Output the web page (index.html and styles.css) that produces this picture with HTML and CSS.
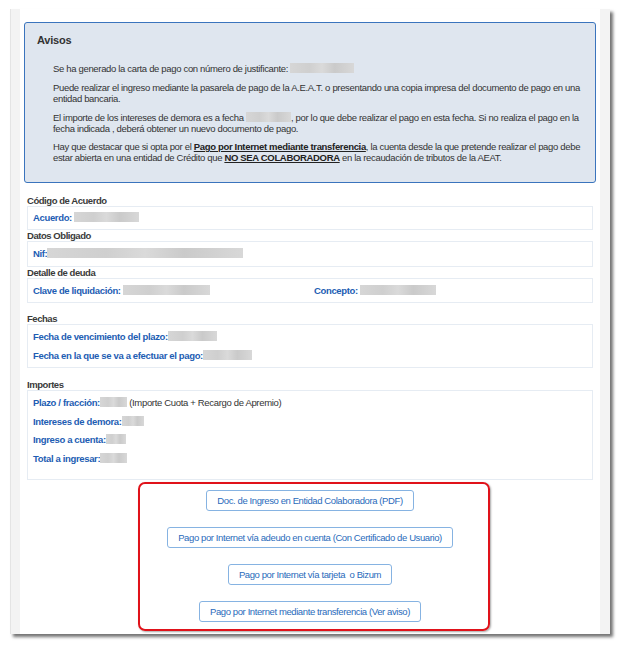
FILE: index.html
```html
<!DOCTYPE html>
<html lang="es">
<head>
<meta charset="utf-8">
<link rel="stylesheet" href="styles.css">
</head>
<body>
<div class="window">
  <div class="page">
    <div class="avisos">
      <div class="avisos-title">Avisos</div>
      <div class="avisos-body">
        <p>Se ha generado la carta de pago con número de justificante: <span class="blur w64"></span></p>
        <p>Puede realizar el ingreso mediante la pasarela de pago de la A.E.A.T. o presentando una copia impresa del documento de pago en una entidad bancaria.</p>
        <p class="p3">El importe de los intereses de demora es a fecha <span class="blur w45"></span>, por lo que debe realizar el pago en esta fecha. Si no realiza el pago en la fecha indicada , deberá obtener un nuevo documento de pago.</p>
        <p>Hay que destacar que si opta por el <b class="ul">Pago por Internet mediante transferencia</b>, la cuenta desde la que pretende realizar el pago debe estar abierta en una entidad de Crédito que <b class="ul">NO SEA COLABORADORA</b> en la recaudación de tributos de la AEAT.</p>
      </div>
    </div>

    <div class="sec-label first">Código de Acuerdo</div>
    <div class="box b1"><div class="row"><span class="k">Acuerdo:</span> <span class="blur w65"></span></div></div>

    <div class="sec-label">Datos Obligado</div>
    <div class="box b2"><div class="row"><span class="k">Nif:</span><span class="blur w196"></span></div></div>

    <div class="sec-label">Detalle de deuda</div>
    <div class="box b3">
      <div class="row two">
        <div class="cell"><span class="k">Clave de liquidación:</span> <span class="blur w87"></span></div>
        <div class="cell"><span class="k">Concepto:</span> <span class="blur w76"></span></div>
      </div>
    </div>

    <div class="sec-label gap">Fechas</div>
    <div class="box b4">
      <div class="row"><span class="k">Fecha de vencimiento del plazo:</span><span class="blur w49"></span></div>
      <div class="row"><span class="k">Fecha en la que se va a efectuar el pago:</span><span class="blur w49"></span></div>
    </div>

    <div class="sec-label gap2">Importes</div>
    <div class="box b5">
      <div class="row"><span class="k">Plazo / fracción:</span><span class="blur w27"></span> (Importe Cuota + Recargo de Apremio)</div>
      <div class="row"><span class="k">Intereses de demora:</span><span class="blur w22"></span></div>
      <div class="row"><span class="k">Ingreso a cuenta:</span><span class="blur w20"></span></div>
      <div class="row"><span class="k">Total a ingresar:</span><span class="blur w27"></span></div>
    </div>

    <div class="actions">
      <button class="btn">Doc. de Ingreso en Entidad Colaboradora (PDF)</button>
      <button class="btn">Pago por Internet vía adeudo en cuenta (Con Certificado de Usuario)</button>
      <button class="btn">Pago por Internet vía tarjeta &nbsp;o Bizum</button>
      <button class="btn">Pago por Internet mediante transferencia (Ver aviso)</button>
    </div>
    <div class="highlight"></div>
  </div>
</div>
</body>
</html>
```

FILE: styles.css
```css
* { box-sizing: border-box; }
html, body { margin: 0; padding: 0; background: #ffffff; }
body {
  font-family: "Liberation Sans", Arial, sans-serif;
  color: #333333;
  width: 621px;
  height: 645px;
  overflow: hidden;
}
.window {
  margin: 9px 0 0 10px;
  width: 600px;
  height: 625px;
  background: #f3f3f3;
  box-shadow: 3px 3px 3px rgba(0, 0, 0, 0.55);
  border-left: 1px solid #e4e4e4;
}
.page {
  margin: 0 10px 0 9px;
  height: 100%;
  background: #ffffff;
  padding: 13px 4px 0 4px;
  position: relative;
}
.avisos {
  border: 1.5px solid #3a74bd;
  border-radius: 3px;
  background: #dfe6ef;
  padding: 10px 12px 19px 12px;
  height: 161px;
}
.avisos-title {
  font-weight: bold;
  font-size: 11px;
  letter-spacing: -0.2px;
  line-height: 14px;
}
.avisos-body {
  padding-left: 16px;
  font-size: 9.5px;
  letter-spacing: -0.33px;
  line-height: 11px;
  padding-top: 16px;
}
.avisos-body p { margin: 0 0 8px 0; }
.avisos-body p.p3 { margin-bottom: 7px; }
.ul { text-decoration: underline; color: #222; }
.blur {
  display: inline-block;
  height: 10px;
  vertical-align: -1px;
  background: linear-gradient(90deg, #d6d6d6, #cfcfcf 30%, #dadada 50%, #cacaca 70%, #d8d8d8);
  filter: blur(0.6px);
}
.w20 { width: 20px; } .w22 { width: 22px; } .w27 { width: 27px; }
.w45 { width: 45px; } .w49 { width: 49px; } .w64 { width: 64px; }
.w65 { width: 65px; } .w76 { width: 76px; } .w87 { width: 87px; }
.w196 { width: 196px; }

.sec-label {
  font-size: 9.5px;
  font-weight: bold;
  letter-spacing: -0.45px;
  color: #3a3a3a;
  line-height: 11px;
  padding-left: 3px;
  margin-top: 0;
}
.sec-label.first { margin-top: 11.5px; }
.sec-label.gap { margin-top: 10px; }
.sec-label.gap2 { margin-top: 11.5px; }
.box {
  margin: 0 3px;
  border: 1px solid #e6ecf3;
  background: #ffffff;
  padding: 0 5px;
}
.row {
  font-size: 9.5px;
  letter-spacing: -0.33px;
  line-height: 12px;
  color: #333;
}
.k { color: #1d5db3; font-weight: bold; letter-spacing: -0.35px; }
.b1 { padding-top: 5px; padding-bottom: 5px; }
.b2 { padding-top: 6px; padding-bottom: 6px; }
.b3 { padding-top: 6px; padding-bottom: 5px; }
.b4 { padding-top: 6px; padding-bottom: 5px; display: flex; flex-direction: column; gap: 7px; }
.b5 { padding-top: 6px; padding-bottom: 14px; display: flex; flex-direction: column; gap: 6.7px; }
.two { display: grid; grid-template-columns: 281px 1fr; }

.actions {
  display: flex;
  flex-direction: column;
  align-items: center;
  gap: 16px;
  padding-top: 10px;
}
.btn {
  font-family: "Liberation Sans", Arial, sans-serif;
  font-size: 9.5px;
  letter-spacing: -0.4px;
  color: #2a6bbb;
  background: #ffffff;
  border: 1px solid #86b3e2;
  border-radius: 3px;
  height: 21px;
  padding: 0 10px;
  line-height: 19px;
}
.highlight {
  position: absolute;
  left: 118px;
  top: 473px;
  width: 352px;
  height: 149px;
  border: 2px solid #e0121a;
  border-radius: 7px;
  box-shadow: 1px 1px 2px rgba(0, 0, 0, 0.35);
  pointer-events: none;
}
```
